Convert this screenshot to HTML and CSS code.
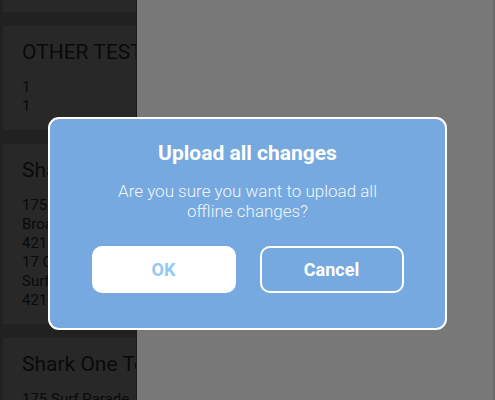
FILE: index.html
```html
<!DOCTYPE html>
<html>
<head>
<meta charset="utf-8">
<link rel="stylesheet" href="styles.css">
</head>
<body>
<div class="app">
  <aside class="list">
    <div class="card card-stub"></div>
    <div class="card">
      <div class="card-title">OTHER TEST SHOP</div>
      <div class="card-line">1</div>
      <div class="card-line">1</div>
    </div>
    <div class="card">
      <div class="card-title">Shark Two Test</div>
      <div class="card-line">175 Surf Parade</div>
      <div class="card-line">Broadbeach</div>
      <div class="card-line">4218</div>
      <div class="card-line">17 Cavill Avenue</div>
      <div class="card-line">Surfers Paradise</div>
      <div class="card-line">4217</div>
    </div>
    <div class="card">
      <div class="card-title">Shark One Test</div>
      <div class="card-line">175 Surf Parade</div>
      <div class="card-line">Broadbeach</div>
    </div>
  </aside>
  <main class="detail"></main>
</div>

<div class="dialog">
  <div class="dialog-title">Upload all changes</div>
  <div class="dialog-text">Are you sure you want to upload all<br>offline changes?</div>
  <div class="dialog-actions">
    <button class="btn btn-ok">OK</button>
    <button class="btn btn-cancel">Cancel</button>
  </div>
</div>
</body>
</html>
```

FILE: styles.css
```css
* { box-sizing: border-box; }
html, body {
  margin: 0;
  padding: 0;
  height: 100%;
  overflow: hidden;
  font-family: Roboto, "Liberation Sans", sans-serif;
}
.app {
  display: flex;
  height: 400px;
  width: 495px;
}
.list {
  width: 137px;
  flex: none;
  background: #212121;
  border-right: 1px solid #1b1b1b;
  overflow: hidden;
  display: flex;
  flex-direction: column;
  gap: 14px;
}
.card {
  margin-left: 3px;
  width: 300px;
  background: #282828;
  padding: 14px 19px 14px 19px;
  white-space: nowrap;
  color: #0a0a0a;
  flex: none;
}
.card-stub {
  height: 12px;
  padding: 0;
}
.card-title {
  font-size: 21px;
  line-height: 25px;
  margin-bottom: 13px;
}
.card-line {
  font-size: 15px;
  line-height: 19px;
}
.detail {
  flex: 1;
  background: #787878;
  border-right: 2px solid #6c6c6c;
}
.dialog {
  position: absolute;
  top: 117px;
  left: 48px;
  width: 399px;
  height: 213px;
  background: #76a9df;
  border: 2px solid #ffffff;
  border-radius: 11px;
  padding: 22px 0 0 0;
  text-align: center;
  color: #ffffff;
}
.dialog-title {
  font-size: 21px;
  line-height: 25px;
  font-weight: 700;
}
.dialog-text {
  margin-top: 15px;
  font-size: 17px;
  line-height: 20px;
  font-weight: 300;
  color: #f2f6fb;
}
.dialog-actions {
  margin-top: 25px;
  display: flex;
  justify-content: center;
  gap: 24px;
}
.btn {
  width: 144px;
  height: 47px;
  border-radius: 10px;
  border: 2px solid #ffffff;
  font-family: Roboto, "Liberation Sans", sans-serif;
  font-size: 18px;
  font-weight: 700;
  padding: 0;
}
.btn-ok {
  background: #ffffff;
  color: #93c9f2;
}
.btn-cancel {
  background: transparent;
  color: #ffffff;
}
```
